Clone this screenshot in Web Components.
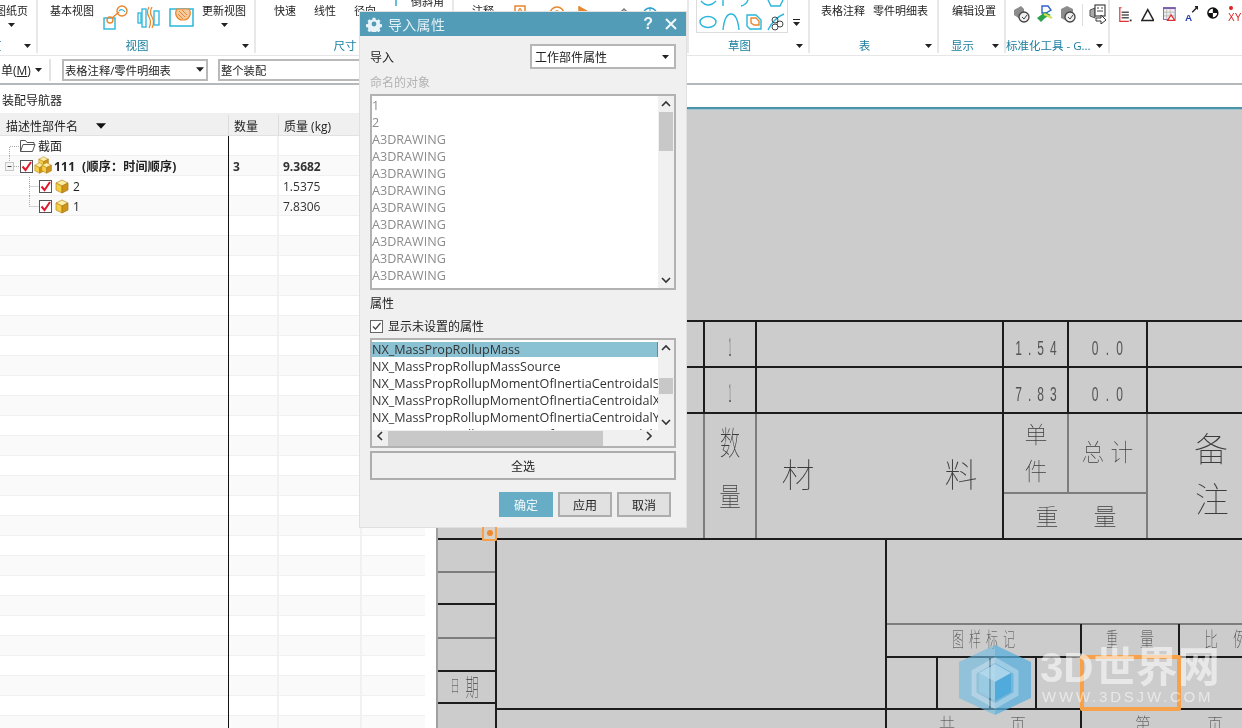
<!DOCTYPE html>
<html lang="zh">
<head>
<meta charset="utf-8">
<title>导入属性</title>
<style>
  html, body { margin: 0; padding: 0; height: 100%; overflow: hidden; background: #fff; }
  body { font-family: "Open Sans", "Noto Sans CJK SC", sans-serif; color: #333; }
  nx-app svg { display: block; }
</style>
</head>
<body>

<nx-app>
  <nx-ribbon>
    <nx-group width="64" label="页" pad="21" gap="0">
      <nx-tool arrow>图纸页</nx-tool>
    </nx-group>
    <nx-group width="218" label="视图" pad="12" gap="9">
      <nx-tool>基本视图</nx-tool>
      <svg class="ic" width="25" height="26" viewBox="0 0 25 26" fill="none" style="margin-top:5px">
        <rect x="1" y="13" width="11" height="11" stroke="#29b6dc" stroke-width="1.4"/>
        <circle cx="7" cy="15" r="3" stroke="#e8872e" stroke-width="1.4"/>
        <path d="M9 13l7-6" stroke="#e8872e" stroke-width="1.4"/>
        <circle cx="19" cy="6" r="5" stroke="#e8872e" stroke-width="1.4"/>
        <path d="M16 6q3-3 6 1" stroke="#29b6dc" stroke-width="1.2"/>
      </svg>
      <svg class="ic" width="23" height="26" viewBox="0 0 23 26" fill="none" style="margin-top:5px">
        <rect x="1" y="8" width="3" height="10" stroke="#29b6dc" stroke-width="1.3"/>
        <rect x="5" y="4" width="4" height="18" stroke="#29b6dc" stroke-width="1.3"/>
        <path d="M12 2q-3 5 0 10t0 11M15 2q-3 5 0 10t0 11" stroke="#e8872e" stroke-width="1.3"/>
        <rect x="17" y="6" width="5" height="14" stroke="#29b6dc" stroke-width="1.3"/>
      </svg>
      <svg class="ic" width="25" height="20" viewBox="0 0 25 20" fill="none" style="margin:8px -1px 0 0">
        <rect x="1" y="1" width="23" height="17" stroke="#29b6dc" stroke-width="1.5"/>
        <path d="M8 1a7 7 0 0 0 6 11 7 7 0 0 0 6-11z" fill="#f4c9a0" stroke="#e8872e" stroke-width="1.2"/>
        <path d="M10 3l6 6M13 2l5 5M9 6l5 5" stroke="#e8872e"/>
      </svg>
      <nx-tool arrow>更新视图</nx-tool>
    </nx-group>
    <nx-group width="198" label="尺寸" pad="18" gap="18">
      <nx-tool>快速</nx-tool>
      <nx-tool>线性</nx-tool>
      <nx-tool>径向</nx-tool>
      <svg class="ic" width="4" height="6" viewBox="0 0 4 6"><path d="M2 0v6" stroke="#29a0d0" stroke-width="1.4"/></svg>
      <span style="margin:-9px 0 0 -5px;line-height:22px;font-size:11px;color:#222">倒斜角</span>
    </nx-group>
    <nx-group width="235" label="注释" pad="18" gap="20">
      <nx-tool>注释</nx-tool>
      <svg width="146" height="13" viewBox="0 0 146 13" fill="none" style="margin-top:5px">
        <rect x="1" y="1" width="10" height="14" stroke="#e8872e" stroke-width="1.5"/>
        <path d="M6 4v7M4 6l2-3 2 3" stroke="#e8872e"/>
        <circle cx="43" cy="9" r="7" stroke="#e8872e" stroke-width="1.5"/>
        <path d="M40 7q3-3 6 0l-3 3" stroke="#e8872e"/>
        <path d="M65 1v12" stroke="#e8872e" stroke-width="1.5"/><path d="M65 1l9 5-9 5z" fill="#e8872e"/>
        <path d="M105 9l5-5 5 5" stroke="#777" stroke-width="1.500"/>
        <circle cx="136" cy="10" r="7" stroke="#29a0d0" stroke-width="1.5"/><path d="M136 2v12M129 9h14" stroke="#29a0d0"/>
      </svg>
    </nx-group>
    <nx-group width="121" label="草图" pad="7" gap="6">
      <nx-sketch-gallery></nx-sketch-gallery>
    </nx-group>
    <nx-group width="129" label="表" pad="11" gap="8">
      <nx-tool>表格注释</nx-tool>
      <nx-tool>零件明细表</nx-tool>
    </nx-group>
    <nx-group width="67" label="显示" pad="13" gap="0">
      <nx-tool>编辑设置</nx-tool>
    </nx-group>
    <nx-group width="104" label="标准化工具 - G..." pad="7" gap="6">
      <svg width="17" height="18" viewBox="0 0 17 18" style="margin-top:5px">
        <path d="M1 5l7-4 3 3v7l-4 3-6-4z" fill="#8c8c8c"/><circle cx="11" cy="12" r="5" fill="#eee" stroke="#444" stroke-width="1.3"/><path d="M9 12l2 2 3-4" stroke="#444" fill="none"/>
      </svg>
      <svg width="17" height="18" viewBox="0 0 17 18" style="margin-top:5px">
        <path d="M6 1h6l3 4-5 3H6z" fill="#fff" stroke="#2f62c9" stroke-width="1.4"/><path d="M1 13l8-6 6 3-6 3-4 4z" fill="#29a24a"/><path d="M8 9l8 4" stroke="#d7e05a" stroke-width="2"/>
      </svg>
      <svg width="17" height="18" viewBox="0 0 17 18" style="margin-top:5px">
        <path d="M2 4l6-3 6 3v9l-6 3-6-3z" fill="#8c8c8c"/><circle cx="11" cy="12" r="5" fill="#eee" stroke="#444" stroke-width="1.3"/><path d="M9 12l2 2 3-4" stroke="#444" fill="none"/>
      </svg>
      <span style="width:1px;height:22px;margin-top:4px;background:#ddd"></span>
      <svg width="17" height="20" viewBox="0 0 17 20" fill="none" style="margin-top:4px">
        <path d="M1 6l5-2v10l-5-2z" fill="#aaa" stroke="#555"/><rect x="6" y="1" width="10" height="11" fill="#fff" stroke="#444" stroke-width="1.2"/><path d="M8 4h2M12 4h2M8 7h6" stroke="#444"/><path d="M7 14h5v-3l5 5-5 4v-3H7z" fill="#fff" stroke="#333"/>
      </svg>
    </nx-group>
    <nx-group width="132" label="" pad="8" gap="9">
      <svg width="15" height="18" viewBox="0 0 15 18" fill="none" style="margin-top:6px">
        <path d="M1 1h3M2 1v15h10" stroke="#d33" stroke-width="1.3"/><path d="M4 6h8M4 9h8M4 12h8" stroke="#555" stroke-width="1.5"/><path d="M13 15h2" stroke="#333" stroke-width="2"/>
      </svg>
      <svg width="15" height="16" viewBox="0 0 15 16" fill="none" style="margin-top:7px">
        <path d="M7.5 2L14 14H1z" stroke="#222" stroke-width="1.6"/>
      </svg>
      <svg width="14" height="16" viewBox="0 0 14 16" fill="none" style="margin-top:6px">
        <rect x="0.5" y="1" width="13" height="13" fill="#eee" stroke="#7b5dac"/><path d="M0 1.500h14" stroke="#7b5dac" stroke-width="2"/><path d="M4 3v10M8 3v10M1 6h12M1 10h12" stroke="#bbb"/><path d="M9 9l4 6H5z" fill="#fff" stroke="#d33" stroke-width="1.4"/>
      </svg>
      <svg width="15" height="18" viewBox="0 0 15 18" fill="none" style="margin-top:5px">
        <path d="M8 7l6-6M11 1h3v3" stroke="#222" stroke-width="1.5"/>
        <text x="0" y="17" font-family="Liberation Sans" font-size="11" font-weight="700" fill="#2438b8">A</text>
      </svg>
      <svg width="13" height="14" viewBox="0 0 13 14" style="margin-top:6px">
        <circle cx="6.500" cy="7" r="5.500" fill="#fff" stroke="#111" stroke-width="1.6"/><path d="M6.500 7V1.500a5.500 5.500 0 0 1 5.500 5.500zM6.500 7v5.500A5.500 5.500 0 0 1 1 7z" fill="#111"/>
      </svg>
      <svg width="14" height="20" viewBox="0 0 14 20" style="margin-top:5px;overflow:visible">
        <circle cx="3" cy="3" r="2" fill="#d22"/>
        <text x="0" y="16" font-family="Liberation Sans" font-size="10" fill="#d22">XY</text>
      </svg>
    </nx-group>
  </nx-ribbon>

  <nx-toolbar>
    <span class="menu">单(<u>M</u>)</span>
    <nx-combo width="146" style="margin-left:11px">表格注释/零件明细表</nx-combo>
    <nx-combo width="180" style="margin-left:10px" noarrow>整个装配</nx-combo>
  </nx-toolbar>

  <nx-main>
    <nx-navigator>
      <nx-row kind="folder">截面</nx-row>
      <nx-row kind="root" qty="3" mass="9.3682" bold>111&nbsp; (顺序：时间顺序)</nx-row>
      <nx-row kind="child" mass="1.5375">2</nx-row>
      <nx-row kind="last" mass="7.8306">1</nx-row>
      <nx-row></nx-row><nx-row></nx-row><nx-row></nx-row><nx-row></nx-row>
      <nx-row></nx-row><nx-row></nx-row><nx-row></nx-row><nx-row></nx-row>
      <nx-row></nx-row><nx-row></nx-row><nx-row></nx-row><nx-row></nx-row>
      <nx-row></nx-row><nx-row></nx-row><nx-row></nx-row><nx-row></nx-row>
      <nx-row></nx-row><nx-row></nx-row><nx-row></nx-row><nx-row></nx-row>
      <nx-row></nx-row><nx-row></nx-row><nx-row></nx-row><nx-row></nx-row>
      <nx-row></nx-row><nx-row></nx-row>
    </nx-navigator>
    <nx-drawing></nx-drawing>
  </nx-main>

  <nx-dialog heading="导入属性">
    <nx-listbox slot="named" style="height:196px" muted thumb-top="0" thumb-h="39">
      <div>1</div><div>2</div>
      <div>A3DRAWING</div><div>A3DRAWING</div><div>A3DRAWING</div><div>A3DRAWING</div>
      <div>A3DRAWING</div><div>A3DRAWING</div><div>A3DRAWING</div><div>A3DRAWING</div><div>A3DRAWING</div>
    </nx-listbox>
    <nx-listbox slot="attrs" style="height:110px" hscroll thumb-top="22" thumb-h="16">
      <div class="sel">NX_MassPropRollupMass</div>
      <div>NX_MassPropRollupMassSource</div>
      <div>NX_MassPropRollupMomentOfInertiaCentroidalS</div>
      <div>NX_MassPropRollupMomentOfInertiaCentroidalX</div>
      <div>NX_MassPropRollupMomentOfInertiaCentroidalY</div>
      <div>NX_MassPropRollupMomentOfInertiaCentroidalZ</div>
    </nx-listbox>
  </nx-dialog>

  <nx-handle></nx-handle>
  <nx-watermark></nx-watermark>
</nx-app>

<script>
const arrowSvg = (w = 7, h = 4, c = '#222') =>
  `<svg width="${w}" height="${h}" viewBox="0 0 7 4" style="display:block"><path d="M0 0h7L3.500 4z" fill="${c}"/></svg>`;

const checkBox = (x, y) => `
  <rect x="${x + .5}" y="${y + .5}" width="12" height="12" fill="#fff" stroke="#555"/>
  <path d="M${x + 2.500} ${y + 6.500}l3 3.500 5.500-8" fill="none" stroke="#e2182c" stroke-width="2"/>`;

const cube = (x, y, s = 1) => `
  <g transform="translate(${x} ${y}) scale(${s})">
    <path d="M1 4l6-3 6 3-6 3z" fill="#fdeea6" stroke="#b98a1c" stroke-width=".7"/>
    <path d="M1 4l6 3v7l-6-3z" fill="#f7cf45" stroke="#b98a1c" stroke-width=".7"/>
    <path d="M13 4l-6 3v7l6-3z" fill="#cf9418" stroke="#a5761a" stroke-width=".7"/>
  </g>`;

class NxApp extends HTMLElement {
  constructor() {
    super();
    this.attachShadow({ mode: 'open' });
    this.shadowRoot.innerHTML = `
      <style>
        :host { display: flex; flex-direction: column; position: relative; width: 1242px; height: 728px; overflow: hidden; background: #fff; filter: blur(.35px); }
      </style>
      <slot></slot>`;
  }
}

class NxRibbon extends HTMLElement {
  constructor() {
    super();
    this.attachShadow({ mode: 'open' });
    this.shadowRoot.innerHTML = `
      <style>
        :host { display: flex; height: 55px; flex: none; margin-left: -26px; background: #fff; border-bottom: 1px solid #e6e6e6; font-size: 11px; }
      </style>
      <slot></slot>`;
  }
}

class NxGroup extends HTMLElement {
  constructor() {
    super();
    this.attachShadow({ mode: 'open' });
  }

  connectedCallback() {
    const label = this.getAttribute('label');
    this.shadowRoot.innerHTML = `
      <style>
        :host { display: flex; flex-direction: column; flex: none; box-sizing: border-box; width: ${this.getAttribute('width')}px; height: 53px; border-right: 2px solid #e8e8e8; overflow: hidden; }
        :host(:last-child) { border-right: 0; }
        .body { flex: 1; display: flex; align-items: flex-start; padding-left: ${this.getAttribute('pad')}px; gap: ${this.getAttribute('gap')}px; min-height: 0; }
        .foot { flex: none; height: 14px; display: flex; align-items: center; }
        .label { flex: 1; text-align: center; color: #1b7f9f; font-size: 11.500px; line-height: 14px; white-space: nowrap; }
        .more { flex: none; width: 18px; display: flex; justify-content: center; }
      </style>
      <div class="body"><slot></slot></div>
      <div class="foot">
        <div class="label">${label}</div>
        ${label ? `<div class="more">${arrowSvg()}</div>` : ''}
      </div>`;
  }
}

class NxTool extends HTMLElement {
  constructor() {
    super();
    this.attachShadow({ mode: 'open' });
  }

  connectedCallback() {
    this.shadowRoot.innerHTML = `
      <style>
        :host { display: inline-flex; flex-direction: column; align-items: center; flex: none; color: #222; font-size: 11px; line-height: 22px; white-space: nowrap; }
        .arrow { margin-top: 1px; }
      </style>
      <slot></slot>
      ${this.hasAttribute('arrow') ? `<div class="arrow">${arrowSvg()}</div>` : ''}`;
  }
}

class NxSketchGallery extends HTMLElement {
  constructor() {
    super();
    this.attachShadow({ mode: 'open' });
    this.shadowRoot.innerHTML = `
      <style>
        :host { display: flex; flex: none; gap: 5px; }
        .box { width: 92px; height: 33px; box-sizing: border-box; border: 1px solid #dcdcdc; border-top: 0; }
        svg { display: block; }
        .side { width: 8px; padding-top: 19px; }
        .side i { display: block; width: 7px; height: 1px; background: #222; margin-bottom: 2px; }
      </style>
      <div class="box">
        <svg width="90" height="32" viewBox="0 0 90 32" fill="none" stroke="#29b6dc" stroke-width="1.400">
          <path d="M4 1q7 8 15 0M26 0v6M44 6q5-1 7-6M71 0l3 6h9l3-6"/>
          <ellipse cx="11" cy="22" rx="8" ry="5.500"/>
          <path d="M26 30c1-10 3-16 8-16s7 6 8 16"/>
          <path d="M50 15h9l5 5v9H53l-3-3z"/>
          <path d="M54 18h5l3 3v4h-5l-3-2z" stroke="#e8872e"/>
          <path d="M71 30q6-12 16-16"/>
          <g stroke="#444" stroke-width="1"><circle cx="78" cy="20" r="3"/><circle cx="83" cy="24" r="3"/><circle cx="78" cy="27" r="3"/></g>
        </svg>
      </div>
      <div class="side"><i></i>${arrowSvg()}</div>`;
  }
}

class NxToolbar extends HTMLElement {
  constructor() {
    super();
    this.attachShadow({ mode: 'open' });
    this.shadowRoot.innerHTML = `
      <style>
        :host { display: flex; align-items: center; flex: none; box-sizing: border-box; height: 29px; background: #fff; border-bottom: 2px solid #b4b8ba; font-size: 12px; color: #222; }
        .arrow { margin: 0 7px; }
        .sep { width: 2px; height: 22px; background: #e4e4e4; }
      </style>
      <div style="width:27px;padding-left:1px;white-space:nowrap"><slot name="menu"></slot></div>
      <div class="arrow">${arrowSvg()}</div>
      <div class="sep"></div>
      <slot></slot>`;
  }

  connectedCallback() {
    const menu = this.querySelector('.menu');
    if (menu) menu.slot = 'menu';
  }
}

class NxCombo extends HTMLElement {
  constructor() {
    super();
    this.attachShadow({ mode: 'open' });
  }

  connectedCallback() {
    this.shadowRoot.innerHTML = `
      <style>
        :host { display: flex; align-items: center; justify-content: space-between; flex: none; box-sizing: border-box; width: ${this.getAttribute('width')}px; height: 22px; padding: 0 2px 0 1px; background: #fff; border: 2px solid #b9b9b9; font-size: 11.300px; color: #222; white-space: nowrap; }
      </style>
      <slot></slot>
      ${this.hasAttribute('noarrow') ? '' : arrowSvg(8, 5)}`;
  }
}

class NxMain extends HTMLElement {
  constructor() {
    super();
    this.attachShadow({ mode: 'open' });
    this.shadowRoot.innerHTML = `
      <style>
        :host { display: flex; flex: 1; min-height: 0; }
      </style>
      <slot></slot>`;
  }
}

class NxNavigator extends HTMLElement {
  constructor() {
    super();
    this.attachShadow({ mode: 'open' });
    this.shadowRoot.innerHTML = `
      <style>
        :host { display: flex; flex-direction: column; flex: none; width: 425px; margin-right: 11px; overflow: hidden; font-size: 12px; color: #222; }
        .title { flex: none; height: 28px; line-height: 31px; padding-left: 2px; border-bottom: 2px solid #efefef; }
        .head { flex: none; display: grid; grid-template-columns: 229px 50px 83px 63px; height: 21px; background: #f0f0f0; border-bottom: 1px solid #e2e2e2; box-sizing: border-box; }
        .head div { padding: 2px 0 0 5px; border-right: 1px solid #dcdcdc; box-sizing: border-box; display: flex; align-items: center; }
        .head div:first-child { padding-left: 6px; }
        .rows { flex: 1; overflow: hidden; }
      </style>
      <div class="title">装配导航器</div>
      <div class="head">
        <div>描述性部件名<span style="margin-left:18px">${arrowSvg(10, 6, '#111')}</span></div>
        <div>数量</div>
        <div>质量 (kg)</div>
        <div></div>
      </div>
      <div class="rows"><slot></slot></div>`;
  }
}

class NxRow extends HTMLElement {
  constructor() {
    super();
    this.attachShadow({ mode: 'open' });
  }

  glyphs(kind) {
    const dot = 'stroke="#aaa" stroke-dasharray="1 1" fill="none"';
    if (kind === 'folder') {
      return `<svg width="38" height="20" viewBox="0 0 38 20" fill="none">
        <path d="M9.500 20V10.500H19" ${dot}/>
        <path d="M20.500 15.500V4.500h5l1.500 2h7v2M20.500 15.500l2.500-7h12l-2.500 7z" fill="#fff" stroke="#555"/>
      </svg>`;
    }
    if (kind === 'root') {
      return `<svg width="54" height="20" viewBox="0 0 54 20">
        <path d="M9.500 0v5" ${dot}/><path d="M14 10.500h6" ${dot}/>
        <rect x="5.500" y="6.500" width="8" height="8" fill="#f4f4f4" stroke="#c8c8c8"/><path d="M7.500 10.500h4" stroke="#444"/>
        ${checkBox(20, 4)}
        ${cube(38, 0, .8)}${cube(34, 6, .8)}${cube(41, 6, .8)}
      </svg>`;
    }
    if (kind === 'child' || kind === 'last') {
      return `<svg width="73" height="20" viewBox="0 0 73 20">
        <path d="M29.500 ${kind === 'child' ? '-3V20' : '0V10.500'}M29.500 10.500H39" ${dot}/>
        ${checkBox(39, 4)}
        ${cube(55, 3)}
      </svg>`;
    }
    return '';
  }

  connectedCallback() {
    const kind = this.getAttribute('kind');
    this.shadowRoot.innerHTML = `
      <style>
        :host { display: grid; grid-template-columns: 229px 50px 83px 63px; box-sizing: border-box; height: 20px; line-height: 21px; background: #fff; border-bottom: 1px solid #f0f0f0; font-size: 12px; }
        :host(:nth-child(even)) { background: #fafafa; }
        :host([bold]) { font-weight: 700; }
        :host([bold]) .name { letter-spacing: .25px; }
        div { box-sizing: border-box; white-space: nowrap; border-right: 2px solid #f1f1f1; }
        .name { display: flex; align-items: flex-start; border-right: 1px solid #111; height: 20px; }
        .num { padding-left: 4px; color: #333; }
        .last-cell { border-right: 0; }
      </style>
      <div class="name">${this.glyphs(kind)}<slot></slot></div>
      <div class="num">${this.getAttribute('qty') || ''}</div>
      <div class="num">${this.getAttribute('mass') || ''}</div>
      <div class="last-cell"></div>`;
  }
}

class NxDrawing extends HTMLElement {
  constructor() {
    super();
    this.attachShadow({ mode: 'open' });
  }

  // page coordinates, the viewBox starts where the sheet starts
  lines() {
    const dark = [
      [686, 321, 1242, 321], [686, 367, 1242, 367], [437, 413, 1242, 413], [437, 539, 1242, 539],
      [704, 321, 704, 413], [756, 321, 756, 413], [1003, 321, 1003, 539], [1068, 321, 1068, 413], [1147, 321, 1147, 413],
      [496, 539, 496, 728], [886, 539, 886, 728], [496, 709, 1242, 709],
      [437, 604, 496, 604], [437, 671, 496, 671], [437, 703, 496, 703],
      [886, 657, 1242, 657], [937, 657, 937, 709], [990, 657, 990, 709], [1036, 657, 1036, 709], [1081, 624, 1081, 728], [1179, 624, 1179, 657]
    ].map(l => `<line x1="${l[0]}" y1="${l[1]}" x2="${l[2]}" y2="${l[3]}" stroke="#1c1c1c" stroke-width="2"/>`).join('');
    const grey = [
      [704, 413, 704, 539], [756, 413, 756, 539], [1068, 413, 1068, 493], [1147, 413, 1147, 539], [1003, 493, 1147, 493],
      [437, 572, 496, 572], [437, 638, 496, 638], [886, 624, 1242, 624]
    ].map(l => `<line x1="${l[0]}" y1="${l[1]}" x2="${l[2]}" y2="${l[3]}" stroke="#7d7d7d" stroke-width="2"/>`).join('');
    return grey + dark;
  }

  labels() {
    // text, centre x, baseline y, font size, horizontal squeeze
    return [
      ['数', 730, 455, 33, .62], ['量', 730, 507, 27, .8],
      ['材', 798, 487, 33, 1], ['料', 961, 487, 33, 1],
      ['单', 1036, 443, 23, 1], ['件', 1036, 480, 24, .95],
      ['总', 1093, 461, 24, .95], ['计', 1122, 461, 24, .95],
      ['备', 1211, 462, 34, 1], ['注', 1212, 512, 34, 1],
      ['重', 1047, 525, 23, 1], ['量', 1105, 525, 23, 1],
      ['日', 455, 692, 17, .55], ['期', 472, 696, 24, .55],
      ['图', 958, 647, 20, .6], ['样', 975, 647, 20, .6], ['标', 992, 647, 20, .6], ['记', 1009, 647, 20, .6],
      ['重', 1112, 647, 20, .6], ['量', 1147, 647, 20, .7], ['比', 1211, 647, 20, .7], ['例', 1240, 647, 20, .7],
      ['共', 947, 733, 20, .8], ['页', 1018, 733, 20, .8], ['第', 1143, 733, 20, .8], ['页', 1215, 733, 20, .8]
    ].map(t => `<text transform="translate(${t[1]} ${t[2]}) scale(${t[4]} 1)" font-size="${t[3]}" text-anchor="middle">${t[0]}</text>`).join('');
  }

  figures() {
    return [
      ['1', 730, 356, 25, .14, 0], ['1', 730, 402, 25, .14, 0],
      ['1.54', 1039, 355, 20, .6, 10], ['0.0', 1111, 355, 20, .6, 12],
      ['7.83', 1039, 401, 20, .6, 10], ['0.0', 1111, 401, 20, .6, 12]
    ].map(t => `<text transform="translate(${t[1]} ${t[2]}) scale(${t[4]} 1)" font-size="${t[3]}" text-anchor="middle" letter-spacing="${t[5]}">${t[0]}</text>`).join('');
  }

  connectedCallback() {
    this.shadowRoot.innerHTML = `
      <style>
        :host { display: block; flex: 1; box-sizing: border-box; padding-top: 22px; min-width: 0; }
        .rule { height: 3px; background: linear-gradient(#4d94aa 0 2px, #9fc4cf 2px); }
        .sheet { background: #cccccc; border-left: 2px solid #a0a0a0; height: 618px; box-sizing: border-box; overflow: hidden; }
        svg { display: block; }
        text { font-family: "Noto Sans CJK SC", sans-serif; font-weight: 100; fill: #3c3c3c; }
        .num text { font-family: "Liberation Sans", sans-serif; fill: #555; }
      </style>
      <div class="rule"></div>
      <div class="sheet">
        <svg width="804" height="618" viewBox="438 110 804 618">
          ${this.lines()}
          <g>${this.labels()}</g>
          <g class="num">${this.figures()}</g>
        </svg>
      </div>`;
  }
}

class NxDialog extends HTMLElement {
  constructor() {
    super();
    this.attachShadow({ mode: 'open' });
  }

  connectedCallback() {
    this.shadowRoot.innerHTML = `
      <style>
        :host { position: absolute; left: 360px; top: 12px; width: 326px; height: 515px; box-sizing: border-box; display: flex; flex-direction: column; background: #f0f0f0; box-shadow: 0 0 0 1px #e0e0e0; font-size: 12px; color: #222; }
        .bar { flex: none; height: 24px; display: flex; align-items: center; background: #529cb7; color: #e3f0f5; font-size: 14px; padding: 0 8px 0 6px; }
        .bar .t { flex: 1; margin-left: 6px; letter-spacing: .3px; }
        .body { flex: 1; padding: 0 10px; display: flex; flex-direction: column; }
        .row { display: flex; justify-content: space-between; align-items: center; margin-top: 8px; height: 25px; }
        .select { width: 146px; height: 25px; box-sizing: border-box; display: flex; align-items: center; justify-content: space-between; padding: 0 5px 0 3px; background: #fff; border: 2px solid #b6b6b6; font-size: 12px; }
        .lab { height: 16px; line-height: 16px; }
        .dim { color: #b2b2b2; margin: 6px 0 3px; }
        .chk { display: flex; align-items: center; gap: 5px; height: 14px; margin: 7px 0 5px; }
        .box { width: 13px; height: 13px; box-sizing: border-box; border: 1px solid #666; background: #fff; }
        .box svg { display: block; }
        .wide { height: 29px; margin-top: 3px; box-sizing: border-box; border: 2px solid #adadad; background: #f0f0f0; display: flex; align-items: center; justify-content: center; }
        .foot { display: flex; justify-content: flex-end; gap: 5px; margin-top: 12px; padding-right: 5px; }
        .btn { width: 54px; height: 25px; box-sizing: border-box; display: flex; align-items: center; justify-content: center; background: #e1e1e1; border: 2px solid #adadad; }
        .btn.ok { background: #67adc6; border-color: #67adc6; color: #f4fafc; }
      </style>
      <div class="bar">
        <svg width="16" height="16" viewBox="0 0 16 16">
          <path fill="#e8f3f7" fill-rule="evenodd" d="M6.500 1h3l.4 2 1.500.7 1.800-1 2 2-1 1.800.7 1.500 2 .4v3l-2 .4-.7 1.500 1 1.800-2 2-1.800-1-1.500.7-.4 2h-3l-.4-2-1.500-.7-1.800 1-2-2 1-1.800-.7-1.500-2-.4v-3l2-.4.7-1.500-1-1.800 2-2 1.800 1 1.500-.7zM8 5.300a2.700 2.700 0 1 0 0 5.400 2.700 2.700 0 0 0 0-5.400z" transform="translate(.8 .8) scale(.9)"/>
        </svg>
        <span class="t">${this.getAttribute('heading')}</span>
        <span style="font:700 16px 'Liberation Sans',sans-serif;color:#eef6f9;margin-right:11px">?</span>
        <svg width="14" height="14" viewBox="0 0 14 14"><path d="M2 2l10 10M12 2L2 12" stroke="#eef6f9" stroke-width="2"/></svg>
      </div>
      <div class="body">
        <div class="row">
          <span>导入</span>
          <div class="select"><span>工作部件属性</span>${arrowSvg()}</div>
        </div>
        <div class="lab dim">命名的对象</div>
        <slot name="named"></slot>
        <div class="lab" style="margin-top:5px;padding-top:1px">属性</div>
        <div class="chk">
          <div class="box"><svg width="11" height="11" viewBox="0 0 11 11"><path d="M2 5.500l2.500 2.500L9.500 2" fill="none" stroke="#444" stroke-width="1.200"/></svg></div>
          <span>显示未设置的属性</span>
        </div>
        <slot name="attrs"></slot>
        <div class="wide">全选</div>
        <div class="foot">
          <div class="btn ok">确定</div>
          <div class="btn">应用</div>
          <div class="btn">取消</div>
        </div>
      </div>`;
  }
}

class NxListbox extends HTMLElement {
  constructor() {
    super();
    this.attachShadow({ mode: 'open' });
  }

  chevron(d) {
    return `<svg width="16" height="16" viewBox="0 0 16 16"><path d="${d}" fill="none" stroke="#333" stroke-width="1.600"/></svg>`;
  }

  connectedCallback() {
    const up = this.chevron('M4 10l4-4 4 4');
    const down = this.chevron('M4 6l4 4 4-4');
    const left = this.chevron('M10 4L6 8l4 4');
    const right = this.chevron('M6 4l4 4-4 4');
    this.shadowRoot.innerHTML = `
      <style>
        :host { display: grid; grid-template-columns: 1fr 16px; grid-template-rows: minmax(0, 1fr) auto; flex: none; box-sizing: border-box; background: #fff; border: 2px solid #b2b2b2; font-size: 12.600px; }
        .items { overflow: hidden; padding-top: .5px; }
        ::slotted(div) { height: 17px; line-height: 17px; white-space: nowrap; overflow: hidden; color: ${this.hasAttribute('muted') ? '#8c8c8c' : '#333'}; }
        ::slotted(.sel) { height: 15px; line-height: 15px; margin: 1px 0; background: #8ac2d4; box-shadow: inset -1px 0 #5f8b9a; }
        .v { display: flex; flex-direction: column; background: #f0f0f0; }
        .v svg { flex: none; }
        .track { flex: 1; min-height: 0; }
        .thumb { background: #c8c8c8; margin: ${this.getAttribute('thumb-top')}px 1px 0; height: ${this.getAttribute('thumb-h')}px; }
        .h { display: none; grid-column: 1 / 3; height: 16px; background: #f0f0f0; align-items: center; }
        :host([hscroll]) .h { display: flex; }
        .h .bar { flex: none; width: 215px; height: 15px; background: #c8c8c8; margin: 0 auto 0 0; }
      </style>
      <div class="items"><slot></slot></div>
      <div class="v">${up}<div class="track"><div class="thumb"></div></div>${down}</div>
      <div class="h">
        <span style="width:16px;flex:none">${left}</span>
        <div class="bar"></div>
        <span style="width:16px;flex:none;margin-right:17px">${right}</span>
      </div>`;
  }
}

class NxHandle extends HTMLElement {
  constructor() {
    super();
    this.attachShadow({ mode: 'open' });
    this.shadowRoot.innerHTML = `
      <style>
        :host { position: absolute; left: 482px; top: 527px; width: 15px; height: 14px; box-sizing: border-box; border: 2px solid #f6a04a; border-top: 0; border-radius: 0 0 2px 2px; background: #d8d2ca; display: flex; align-items: center; justify-content: center; }
        i { width: 6px; height: 6px; background: #f08a2c; border-radius: 50%; }
      </style>
      <i></i>`;
  }
}

class NxWatermark extends HTMLElement {
  constructor() {
    super();
    this.attachShadow({ mode: 'open' });
    this.shadowRoot.innerHTML = `
      <style>
        :host { position: absolute; left: 959px; top: 640px; width: 262px; height: 80px; display: flex; pointer-events: none; }
        .frame { position: absolute; left: 121px; top: 15px; width: 101px; height: 56px; box-sizing: border-box; border: 4px solid #f7a24a; border-radius: 2px; }
        .logo { flex: none; margin: 5px 9px 0 0; position: relative; }
        .txt { position: relative; display: flex; flex-direction: column; color: rgba(255,255,255,.55); white-space: nowrap; }
        .big { font: 700 42px/46px "Liberation Sans", "Noto Sans CJK SC", sans-serif; margin-top: 5px; }
        .url { font: 400 15px/16px "Liberation Sans", sans-serif; letter-spacing: 2.800px; margin: -2px 0 0 2px; }
      </style>
      <div class="frame"></div>
      <svg class="logo" width="72" height="70" viewBox="0 0 72 70">
        <path d="M36 0l36 17v36L36 70 0 53V17z" fill="#6db9e2" opacity=".62"/>
        <path d="M36 0l36 17v36L36 70z" fill="#3fa3d8" opacity=".35"/>
        <path d="M15 27l21-12 21 12v22L36 61 15 49z" fill="none" stroke="#fff" stroke-opacity=".3" stroke-width="5"/>
        <path d="M20 28l16-9 16 9-16 9z" fill="#bfe0f2" opacity=".7"/>
        <path d="M20 28l16 9v19l-16-9z" fill="#a7d4ee" opacity=".45"/>
        <path d="M52 28L36 37v19l16-9z" fill="#4aa8dc" opacity=".85"/>
      </svg>
      <div class="txt">
        <div class="big">3D世界网</div>
        <div class="url">WWW.3DSJW.COM</div>
      </div>`;
  }
}

customElements.define('nx-app', NxApp);
customElements.define('nx-ribbon', NxRibbon);
customElements.define('nx-group', NxGroup);
customElements.define('nx-tool', NxTool);
customElements.define('nx-sketch-gallery', NxSketchGallery);
customElements.define('nx-toolbar', NxToolbar);
customElements.define('nx-combo', NxCombo);
customElements.define('nx-main', NxMain);
customElements.define('nx-navigator', NxNavigator);
customElements.define('nx-row', NxRow);
customElements.define('nx-drawing', NxDrawing);
customElements.define('nx-dialog', NxDialog);
customElements.define('nx-listbox', NxListbox);
customElements.define('nx-handle', NxHandle);
customElements.define('nx-watermark', NxWatermark);
</script>
</body>
</html>
